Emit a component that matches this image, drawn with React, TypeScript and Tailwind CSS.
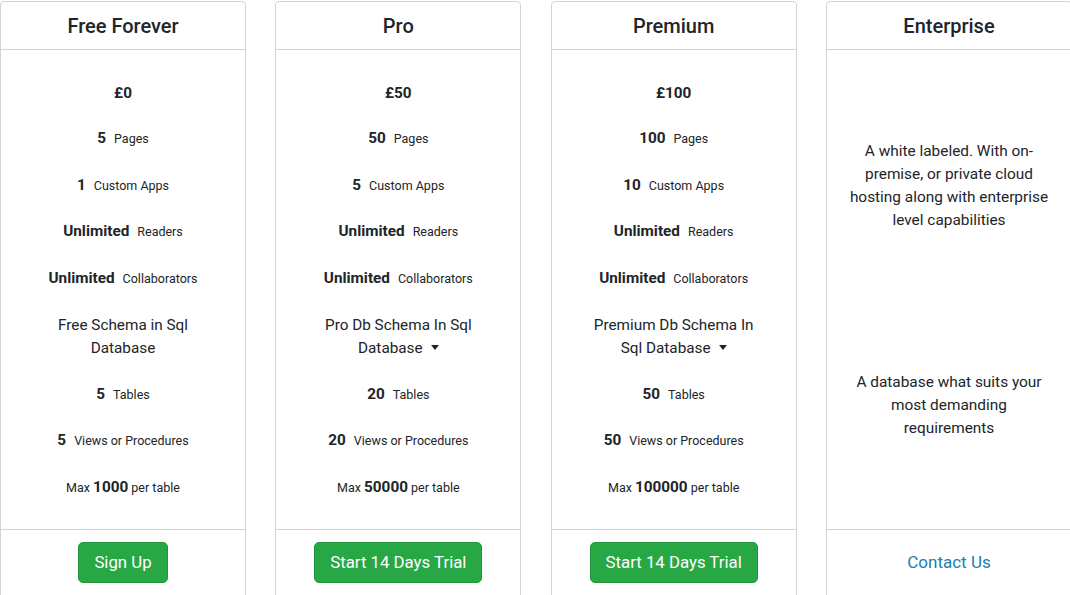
import React from "react";

type Item = { n?: string; label?: string; kind?: "item" | "text" | "max" | "price"; text?: React.ReactNode; caret?: boolean };

const Caret = () => (
  <span className="inline-block ml-[8px] align-[3px] w-0 h-0 border-l-[4.5px] border-r-[4.5px] border-t-[5px] border-l-transparent border-r-transparent border-t-[#212529]" />
);

function Row({ it }: { it: Item }) {
  if (it.kind === "price") return <div className="h-[23px] text-[15.3px] font-bold leading-[23px]">{it.text}</div>;
  if (it.kind === "text")
    return (
      <div className="h-[46px] text-[15.3px] leading-[23px]">
        {it.text}
        {it.caret && <Caret />}
      </div>
    );
  if (it.kind === "max")
    return (
      <div className="h-[23px] leading-[19px]">
        <span className="text-[12.5px]">Max </span>
        <span className="text-[15.3px] font-bold">{it.n}</span>
        <span className="text-[12.5px]"> per table</span>
      </div>
    );
  return (
    <div className="h-[23px] leading-[19px]">
      <span className="text-[15.3px] font-bold">{it.n}</span>
      <span className="text-[12.5px] ml-[8px]">{it.label}</span>
    </div>
  );
}

function Card({ title, items, button }: { title: string; items: Item[]; button: string }) {
  return (
    <div className="w-[246px] shrink-0 border border-[#d3d3d3] rounded-t-[4px] bg-white flex flex-col">
      <div className="h-[48px] shrink-0 border-b border-[#d3d3d3] flex items-center justify-center text-[20px] font-medium text-[#212529]">
        {title}
      </div>
      <div className="h-[479px] shrink-0 pt-[31.5px] flex flex-col items-center gap-[23.5px] text-center text-[#212529]">
        {items.map((it, i) => (
          <Row key={i} it={it} />
        ))}
      </div>
      <div className="border-t border-[#d3d3d3] pt-[12px] h-[80px] shrink-0 flex justify-center">
        <div>
          <button className="px-[15px] py-[6px] text-[16.8px] leading-[27px] text-white bg-[#28a745] border border-[#20963c] rounded-[5px]">
            {button}
          </button>
        </div>
      </div>
    </div>
  );
}

const mk = (price: string, pages: string, apps: string, schema: React.ReactNode, caret: boolean, tables: string, views: string, max: string): Item[] => [
  { kind: "price", text: price },
  { n: pages, label: "Pages" },
  { n: apps, label: "Custom Apps" },
  { n: "Unlimited", label: "Readers" },
  { n: "Unlimited", label: "Collaborators" },
  { kind: "text", text: schema, caret },
  { n: tables, label: "Tables" },
  { n: views, label: "Views or Procedures" },
  { kind: "max", n: max },
];

export default function App() {
  return (
    <div
      className="w-[1070px] h-[595px] overflow-hidden bg-white pt-[1px] flex items-start gap-[29.33px]"
      style={{ fontFamily: "Roboto, 'Liberation Sans', sans-serif" }}
    >
      <Card
        title="Free Forever"
        items={mk("£0", "5", "1", <>Free Schema in Sql<br />Database</>, false, "5", "5", "1000")}
        button="Sign Up"
      />
      <Card
        title="Pro"
        items={mk("£50", "50", "5", <>Pro Db Schema In Sql<br />Database</>, true, "20", "20", "50000")}
        button="Start 14 Days Trial"
      />
      <Card
        title="Premium"
        items={mk("£100", "100", "10", <>Premium Db Schema In<br />Sql Database</>, true, "50", "50", "100000")}
        button="Start 14 Days Trial"
      />
      <div className="w-[246px] shrink-0 border border-[#d3d3d3] rounded-t-[4px] bg-white flex flex-col">
        <div className="h-[48px] shrink-0 border-b border-[#d3d3d3] flex items-center justify-center text-[20px] font-medium text-[#212529]">
          Enterprise
        </div>
        <div className="h-[479px] shrink-0 pt-[89.5px] flex flex-col items-center text-center text-[15.4px] leading-[23px] text-[#212529]">
          <p>
            A white labeled. With on-
            <br />
            premise, or private cloud
            <br />
            hosting along with enterprise
            <br />
            level capabilities
          </p>
          <p className="mt-[139px]">
            A database what suits your
            <br />
            most demanding
            <br />
            requirements
          </p>
        </div>
        <div className="border-t border-[#d3d3d3] pt-[12px] h-[80px] shrink-0 flex justify-center">
          <a className="px-[15px] py-[7px] text-[17px] leading-[27px] text-[#1a80b0]">Contact Us</a>
        </div>
      </div>
    </div>
  );
}
